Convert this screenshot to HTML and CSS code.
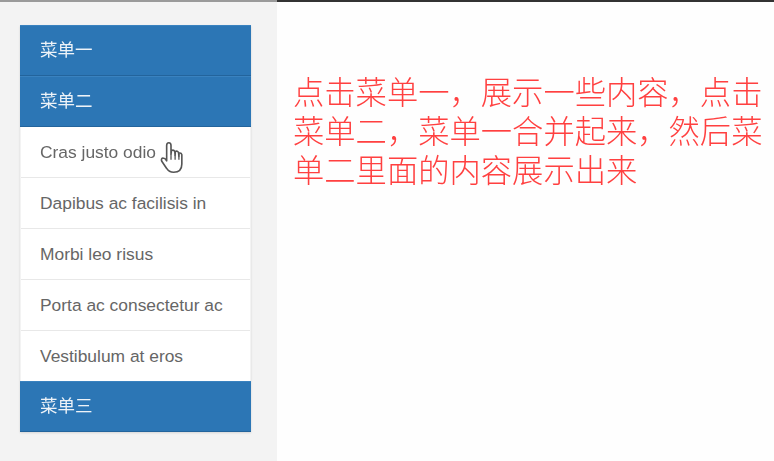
FILE: index.html
```html
<!DOCTYPE html>
<html lang="zh-CN">

<head>
    <meta charset="UTF-8">
    <meta name="viewport" content="width=device-width, initial-scale=1.0">
    <title>手风琴菜单</title>
    <link rel="stylesheet" href="styles.css">
</head>

<body>
    <div class="page">
        <!-- 左侧菜单 -->
        <aside class="sidebar">
            <div class="accordion">
                <div class="menu-title">菜单一</div>
                <div class="menu-title">菜单二</div>
                <ul class="menu-list">
                    <li class="menu-item">Cras justo odio
                        <svg class="hand-cursor" width="26" height="35" viewBox="0 0 24 32" preserveAspectRatio="none">
                            <path d="M8 19 L8 5 Q8 2.500 10 2.500 Q12 2.500 12 5 L12 13 L12.500 9.500 Q14.500 8.500 15.500 10.500 L15.800 14 L16 10.500 Q18 9.500 19 11.500 L19.300 15 L19.500 12 Q21.500 11.500 22 13.500 L22 22 Q22 29.500 14.500 29.500 Q10 29.500 8 26 L3.500 19.500 Q2.500 17 4.500 16.500 Q6.500 16.500 8 19 Z" fill="#fff" stroke="#555" stroke-width="1.500" stroke-linejoin="round" />
                            <path d="M12 13 L12 18 M15.800 14 L15.800 18 M19.300 15 L19.300 18" fill="none" stroke="#555" stroke-width="1.200" />
                        </svg>
                    </li>
                    <li class="menu-item">Dapibus ac facilisis in</li>
                    <li class="menu-item">Morbi leo risus</li>
                    <li class="menu-item">Porta ac consectetur ac</li>
                    <li class="menu-item">Vestibulum at eros</li>
                </ul>
                <div class="menu-title">菜单三</div>
            </div>
        </aside>

        <!-- 右侧说明文字 -->
        <main class="content">
            <p class="note">点击菜单一，展示一些内容，点击菜单二，菜单一合并起来，然后菜单二里面的内容展示出来</p>
        </main>
    </div>
</body>

</html>
```

FILE: styles.css
```css
* {
    margin: 0;
    padding: 0;
    box-sizing: border-box;
}

body {
    width: 774px;
    height: 461px;
    overflow: hidden;
    background-color: #fefefe;
    font-family: "Liberation Sans", "Noto Sans CJK SC", sans-serif;
}

.page {
    display: flex;
    height: 461px;
    filter: blur(0.45px);
}

/* 左侧菜单 */
.sidebar {
    width: 277px;
    flex-shrink: 0;
    padding: 23px 26px 0 20px;
    background-color: #f3f3f3;
    border-top: 2px solid #9a9a9a;
}

.accordion {
    width: 231px;
    box-shadow: 0 1px 2px rgba(0, 0, 0, 0.12);
}

.menu-title {
    height: 51px;
    padding: 0 20px;
    line-height: 48px;
    font-size: 17.5px;
    color: #eef3f8;
    background-color: #2c76b5;
    border-top: 1px solid #3a82bf;
    border-bottom: 1px solid #23649c;
}

.menu-list {
    list-style: none;
    margin: 0 1px;
}

.menu-item {
    position: relative;
    height: 51px;
    padding: 0 19px;
    line-height: 51px;
    font-size: 17.4px;
    color: #666;
    background-color: #fff;
    border-bottom: 1px solid #e8e8e8;
}

.menu-item:last-child {
    height: 50px;
    border-bottom: none;
}

/* 鼠标手势 */
.hand-cursor {
    position: absolute;
    left: 137px;
    top: 13px;
}

/* 右侧说明文字 */
.content {
    flex: 1;
    padding: 72px 0 0 16px;
    border-top: 2px solid #333;
}

.note {
    font-size: 31.3px;
    font-weight: 300;
    line-height: 39px;
    color: #ff4040;
}
```
